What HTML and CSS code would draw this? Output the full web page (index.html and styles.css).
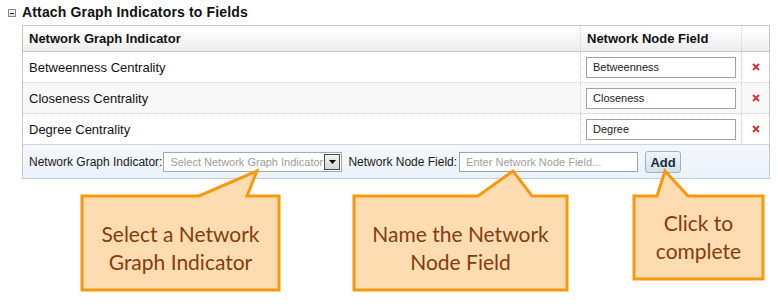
FILE: index.html
```html
<!DOCTYPE html>
<html>
<head>
<meta charset="utf-8">
<link rel="stylesheet" href="styles.css">
</head>
<body>
<div class="page">
  <div class="title-row">
    <span class="toggle"><span class="minus"></span></span>
    <h2 class="title">Attach Graph Indicators to Fields</h2>
  </div>
  <div class="grid">
    <div class="row head">
      <div class="cell c1">Network Graph Indicator</div>
      <div class="cell c2">Network Node Field</div>
      <div class="cell c3"></div>
    </div>
    <div class="row">
      <div class="cell c1">Betweenness Centrality</div>
      <div class="cell c2"><input class="field" value="Betweenness"></div>
      <div class="cell c3"><svg class="del" viewBox="0 0 8 8" width="8" height="8"><path d="M1 1L7 7M7 1L1 7" stroke="#d7302a" stroke-width="1.8" fill="none"/></svg></div>
    </div>
    <div class="row alt">
      <div class="cell c1">Closeness Centrality</div>
      <div class="cell c2"><input class="field" value="Closeness"></div>
      <div class="cell c3"><svg class="del" viewBox="0 0 8 8" width="8" height="8"><path d="M1 1L7 7M7 1L1 7" stroke="#d7302a" stroke-width="1.8" fill="none"/></svg></div>
    </div>
    <div class="row last">
      <div class="cell c1">Degree Centrality</div>
      <div class="cell c2"><input class="field" value="Degree"></div>
      <div class="cell c3"><svg class="del" viewBox="0 0 8 8" width="8" height="8"><path d="M1 1L7 7M7 1L1 7" stroke="#d7302a" stroke-width="1.8" fill="none"/></svg></div>
    </div>
    <div class="foot">
      <span class="lbl">Network Graph Indicator:</span>
      <div class="select"><span class="ph">Select Network Graph Indicator</span><span class="dd"><svg viewBox="0 0 7 4" width="7" height="4"><path d="M0 0H7L3.5 4Z" fill="#000"/></svg></span></div>
      <span class="lbl lbl2">Network Node Field:</span>
      <input class="foot-input" placeholder="Enter Network Node Field...">
      <button class="add">Add</button>
    </div>
  </div>

  <div class="callout co1">
    <svg width="202" height="125" viewBox="0 0 202 125"><path d="M2 28H119L177 3L167 28H199V122H2Z" fill="#fddcb1" stroke="#f7990f" stroke-width="3" stroke-linejoin="miter"/></svg>
    <div class="co-text">Select a Network<br>Graph Indicator</div>
  </div>
  <div class="callout co2">
    <svg width="218" height="125" viewBox="0 0 218 125"><path d="M2 28H126L161 3L180 28H215V122H2Z" fill="#fddcb1" stroke="#f7990f" stroke-width="3" stroke-linejoin="miter"/></svg>
    <div class="co-text">Name the Network<br>Node Field</div>
  </div>
  <div class="callout co3">
    <svg width="134" height="114" viewBox="0 0 134 114"><path d="M2 28H25L33 3L56 28H131V111H2Z" fill="#fddcb1" stroke="#f7990f" stroke-width="3" stroke-linejoin="miter"/></svg>
    <div class="co-text">Click to<br>complete</div>
  </div>
</div>
</body>
</html>
```
FILE: styles.css
```css
* { box-sizing: border-box; }
body { margin: 0; background: #fff; font-family: "Liberation Sans", Arial, sans-serif; color: #111; }
.page { position: relative; width: 778px; height: 305px; }

.title-row { display: flex; align-items: flex-start; height: 25px; padding-top: 4px; }
.toggle { width: 8px; height: 8px; margin: 5px 6px 0 8px; border: 1px solid #8a8a8a; background: linear-gradient(#ffffff, #dcdcdc); display: flex; align-items: center; justify-content: center; }
.minus { width: 4px; height: 1px; background: #222; }
.title { margin: 0; font-size: 14px; line-height: 16px; font-weight: bold; color: #111; letter-spacing: 0.15px; }

.grid { margin-left: 22px; width: 748px; border: 1px solid #c9c9c9; border-bottom-color: #bccddd; }
.row { display: grid; grid-template-columns: 557px 161px 28px; height: 31px; border-bottom: 1px dotted #cfcfcf; }
.row.alt { background: #f8f8f8; }
.row.last { border-bottom: 1px solid #cdd3d9; }
.row.head { height: 26px; background: linear-gradient(#ffffff 0%, #fafafa 40%, #ececec 100%); border-bottom: 1px solid #c4c4c4; font-weight: bold; }
.cell { display: flex; align-items: center; font-size: 13px; }
.c1 { padding-left: 6px; }
.c2 { padding-left: 6px; border-left: 1px dotted #cfcfcf; }
.row .c2 { padding-left: 5px; }
.row.head .c2 { padding-left: 6px; }
.c3 { justify-content: center; border-left: 1px dotted #cfcfcf; }
.del { display: block; margin-left: 1px; }

.field { width: 150px; height: 21px; border: 1px solid #a2a2a2; padding: 0 0 0 6px; font-family: "Liberation Sans", Arial, sans-serif; font-size: 11px; color: #222; background: #fff; outline: none; margin: 0; }

.foot { display: flex; align-items: center; height: 33px; padding-left: 6px; padding-top: 1px; background: linear-gradient(#f4f8fc, #eaf2fa); }
.lbl { font-size: 12px; color: #1a1a1a; margin-right: 1px; white-space: nowrap; }
.lbl2 { margin-left: 6px; margin-right: 2px; }
.select { width: 179px; height: 20px; border: 1px solid #a9a9a9; background: #fff; display: flex; align-items: center; justify-content: space-between; padding-left: 6px; }
.ph { font-size: 11px; color: #9d9d9d; white-space: nowrap; }
.dd { width: 16px; height: 16px; margin-right: 1px; border: 1px solid #4a4a4a; background: linear-gradient(#f2f2f2, #d6d6d6); display: flex; align-items: center; justify-content: center; }
.dd svg { display: block; }
.foot-input { width: 179px; height: 20px; border: 1px solid #a2a2a2; padding: 0 0 0 6px; margin: 0; font-family: "Liberation Sans", Arial, sans-serif; font-size: 11px; background: #fff; outline: none; }
.foot-input::placeholder { color: #a0a0a0; }
.add { margin-left: 7px; width: 36px; height: 22px; padding: 0; border: 1px solid #9db2c6; border-radius: 3px; background: linear-gradient(#f0f5fa, #d3e1ed); font-family: "Liberation Sans", Arial, sans-serif; font-size: 13px; font-weight: bold; color: #1c2b3d; }

.callout { position: absolute; }
.callout svg { position: absolute; left: 0; top: 0; }
.co1 { left: 80px; top: 168px; width: 202px; height: 125px; }
.co2 { left: 352px; top: 168px; width: 218px; height: 125px; }
.co3 { left: 632px; top: 168px; width: 134px; height: 114px; }
.co-text { position: relative; margin-left: 2px; text-align: center; font-family: Lato, "Open Sans", sans-serif; font-size: 21px; line-height: 28px; color: #843c0c; }
.co1 .co-text { width: 197px; padding-top: 52px; }
.co2 .co-text { width: 213px; padding-top: 52px; }
.co3 .co-text { width: 129px; padding-top: 41px; }
```
